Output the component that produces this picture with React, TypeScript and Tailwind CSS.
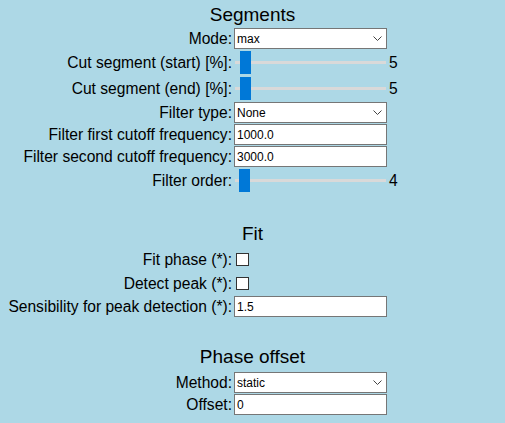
import React from "react";

const font = { fontFamily: '"Liberation Sans", Arial, sans-serif' };

function Label({ children }: { children: React.ReactNode }) {
  return (
    <div className="flex items-center justify-end text-[15.6px] leading-[18px] text-black whitespace-nowrap">
      {children}
    </div>
  );
}

function SelectBox({ value }: { value: string }) {
  return (
    <div className="flex h-[21px] items-center justify-between border border-[#767676] bg-white pl-[2px] pr-[4px] text-[12px] leading-[14px] text-black">
      <span>{value}</span>
      <svg width="9" height="5" viewBox="0 0 9 5" className="text-[#444]">
        <path d="M0.5 0.5 L4.5 4.5 L8.5 0.5" fill="none" stroke="currentColor" strokeWidth="1" />
      </svg>
    </div>
  );
}

function TextBox({ value }: { value: string }) {
  return (
    <div className="flex h-[21px] items-center border border-[#767676] bg-white pl-[2px] text-[12px] leading-[14px] text-black">
      {value}
    </div>
  );
}

function Slider({ offset }: { offset: number }) {
  return (
    <div className="relative flex h-[25px] items-center">
      {/* track */}
      <div className="absolute left-[1px] right-[1px] top-[11px] h-[3px] bg-[#d9d9d9]" />
      <div
        className="relative h-[23px] w-[11px] bg-[#0078d7]"
        style={{ marginLeft: offset }}
      />
    </div>
  );
}

function Checkbox() {
  return (
    <div className="flex h-[23px] items-center">
      <div className="ml-[2px] h-[13px] w-[13px] border border-[#333] bg-white" />
    </div>
  );
}

function Heading({ children, className }: { children: React.ReactNode; className?: string }) {
  return (
    <h3 className={`h-[22px] text-center text-[19px] leading-[22px] font-normal text-black ${className ?? ""}`}>
      {children}
    </h3>
  );
}

const grid = "grid grid-cols-[232px_153px_auto] gap-x-[2px] gap-y-[1px]";

export default function App() {
  return (
    <div className="min-h-screen w-full bg-[#add8e6] pt-[4px]" style={font}>
      {/* Segments */}
      <Heading>Segments</Heading>
      <div className={`${grid} mt-[2px]`}>
        <Label>Mode:</Label>
        <SelectBox value="max" />
        <div />

        <Label>Cut segment (start) [%]:</Label>
        <Slider offset={6} />
        <Label>
          <span className="w-full text-left">5</span>
        </Label>

        <Label>Cut segment (end) [%]:</Label>
        <Slider offset={6} />
        <Label>
          <span className="w-full text-left">5</span>
        </Label>

        <Label>Filter type:</Label>
        <SelectBox value="None" />
        <div />

        <Label>Filter first cutoff frequency:</Label>
        <TextBox value="1000.0" />
        <div />

        <Label>Filter second cutoff frequency:</Label>
        <TextBox value="3000.0" />
        <div />

        <Label>Filter order:</Label>
        <Slider offset={5} />
        <Label>
          <span className="w-full text-left">4</span>
        </Label>
      </div>

      {/* Fit */}
      <Heading className="mt-[30px]">Fit</Heading>
      <div className={`${grid} mt-[3px]`}>
        <Label>Fit phase (*):</Label>
        <Checkbox />
        <div />

        <Label>Detect peak (*):</Label>
        <Checkbox />
        <div />

        <Label>Sensibility for peak detection (*):</Label>
        <TextBox value="1.5" />
        <div />
      </div>

      {/* Phase offset */}
      <Heading className="mt-[29px]">Phase offset</Heading>
      <div className={`${grid} mt-[4px]`}>
        <Label>Method:</Label>
        <SelectBox value="static" />
        <div />

        <Label>Offset:</Label>
        <TextBox value="0" />
        <div />
      </div>
    </div>
  );
}
